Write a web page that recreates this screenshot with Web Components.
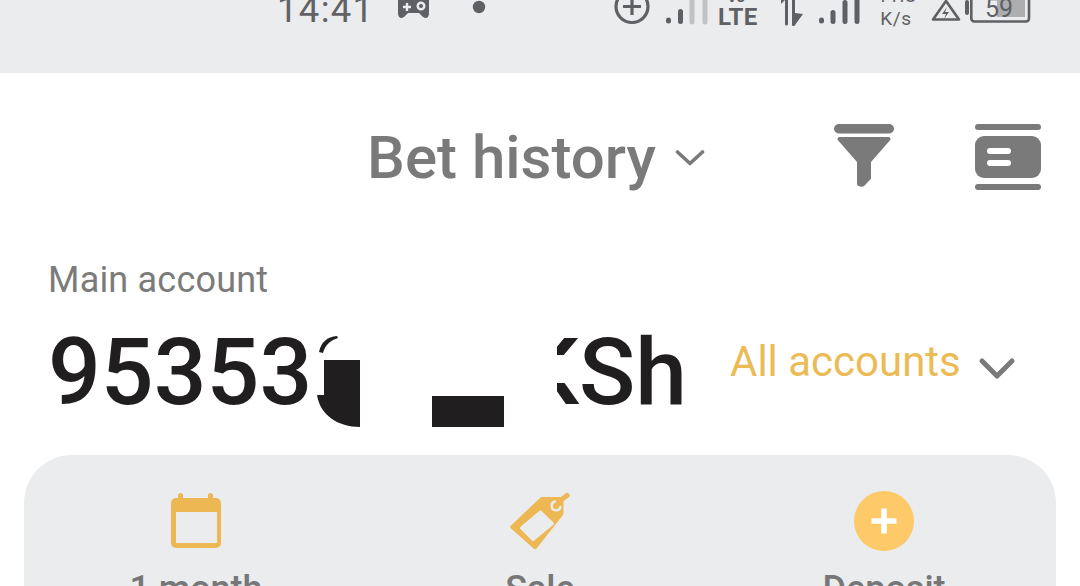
<!DOCTYPE html>
<html><head><meta charset="utf-8"><style>
html,body{margin:0;padding:0;background:#fff}
body{width:1080px;height:586px;overflow:hidden;font-family:Roboto,"Liberation Sans",sans-serif}
</style></head><body>
<app-screen>
<status-bar></status-bar>
<page-header>Bet history</page-header>
<account-summary></account-summary>
<action-panel>
<action-item label="1 month"><svg width="50" height="56" viewBox="0 0 50 56"><path fill="#edb754" fill-rule="evenodd" d="M7 2.500a2.500 2.500 0 0 1 5 0V5h25V2.500a2.500 2.500 0 0 1 5 0V5h3a5 5 0 0 1 5 5v40a5 5 0 0 1-5 5H5a5 5 0 0 1-5-5V10a5 5 0 0 1 5-5h2zM5 19v31h41V19z"/></svg></action-item>
<action-item label="Sale"><svg width="60" height="60" viewBox="0 0 60 60"><g transform="translate(1 2)"><path fill="#edb754" stroke="#edb754" stroke-width="5" stroke-linejoin="round" d="M31 6.500H50V20.500L24 53.500 2 34z"/><path fill="none" stroke="#edb754" stroke-width="5" stroke-linecap="round" d="M50 7 56 2.500"/><path fill="#ebecee" stroke="#ebecee" stroke-width="3" stroke-linejoin="round" d="M29.500 19 41.500 30.500 22 46.500 10.500 35z"/><path fill="none" stroke="#ebecee" stroke-width="2.400" stroke-linecap="round" d="M44 8.500a4.500 4.500 0 1 0 5.500 5.500"/></g></svg></action-item>
<action-item label="Deposit"><svg width="60" height="60" viewBox="0 0 60 60"><circle cx="30" cy="30" r="30" fill="#fdc969"/><path stroke="#fff" stroke-width="5.500" d="M30 17.500v25M17.500 30h25"/></svg></action-item>
</action-panel>
</app-screen>
<script>
function def(name,html){customElements.define(name,class extends HTMLElement{constructor(){super();this.attachShadow({mode:"open"}).innerHTML=html}})}
def("app-screen",`<style>:host{display:flex;flex-direction:column;width:1080px;height:586px;overflow:hidden}::slotted(*){flex:none}</style><slot></slot>`);
def("status-bar",`<style>
:host{display:flex;height:73px;flex:none;background:#ebecee;color:#5f6063;overflow:hidden;align-items:flex-start;font-family:Roboto,"Liberation Sans",sans-serif}
.row{display:flex;width:100%;height:73px;padding-left:277px;box-sizing:border-box;align-items:flex-start}
.time{font-size:36.500px;line-height:42px;margin-top:-11px;width:121px;letter-spacing:1.300px;color:#616265;white-space:nowrap}
svg{display:block;flex:none}
.net{font-size:19px;line-height:23px;text-align:center;letter-spacing:.6px}
.net div{height:23px}
.tech{margin-left:10px;position:relative;width:38px;height:26px;flex:none}
.lte{position:absolute;left:0;top:8px;font-size:24px;font-weight:700;line-height:18px;letter-spacing:.3px}
.vo{position:absolute;left:9px;top:-8px;font-size:15px;font-weight:700;line-height:11px}
</style><div class="row">
<span class="time">14:41</span>
<svg width="36" height="20" viewBox="0 0 36 20"><path fill="#5f6063" d="M3-6h25a3 3 0 0 1 3 3v16c0 2-1 5-3 5s-4-2-5-3l-2-2H10l-2 2c-1 1-3 3-5 3s-3-3-3-5V-3a3 3 0 0 1 3-3z"/><path stroke="#ebecee" stroke-width="2.400" d="M5 7h8M9 3v8"/><circle cx="23" cy="6" r="3.300" fill="none" stroke="#ebecee" stroke-width="2.400"/></svg>
<svg width="14" height="14" viewBox="0 0 14 14" style="margin-left:38px"><circle cx="7" cy="7" r="6.200" fill="#5f6063"/></svg>
<svg width="36" height="26" viewBox="0 0 36 26" style="margin-left:128px"><circle cx="18" cy="6.500" r="16" fill="none" stroke="#5f6063" stroke-width="3.200"/><path stroke="#5f6063" stroke-width="3.200" d="M18-3v18M9 6.500h18"/></svg>
<svg width="42" height="26" viewBox="0 0 42 26" style="margin-left:16px"><g stroke-linecap="round" stroke-width="5" fill="none"><path stroke="#5f6063" d="M2.500 20v1M14.500 11.500v10"/><path stroke="#c1c2c4" d="M26-2v24M39-2v24"/></g></svg>
<div class="tech"><span class="vo">Vo</span><span class="lte">LTE</span></div>
<svg width="28" height="26" viewBox="0 0 28 26" style="margin-left:22px"><path fill="#5f6063" d="M3-2 7-6h3v30a1.500 1.500 0 0 1-3 0V0L3 4zM14-6h3v19l8 1-8 11a1.500 1.500 0 0 1-3-1z"/></svg>
<svg width="44" height="26" viewBox="0 0 44 26" style="margin-left:12px"><g stroke="#5f6063" stroke-linecap="round" fill="none" stroke-width="5"><path d="M3.500 20v1M15 12.500v9M27 2.500v19M39-6v27.500"/></g></svg>
<div class="net" style="margin:-16px 0 0 15px;width:38px;white-space:nowrap"><div>11.8</div><div>K/s</div></div>
<svg width="30" height="22" viewBox="0 0 30 22" style="margin-left:16px"><path fill="none" stroke="#5f6063" stroke-width="2.600" stroke-linejoin="round" d="M15 1 2 19.500h26z"/><path fill="#5f6063" d="M16 7l-5 7h4l-2 5 5-7h-4z"/></svg>
<svg width="66" height="24" viewBox="0 0 66 24" style="margin-left:4px"><rect x="0" y="0" width="4" height="15" rx="2" fill="#5f6063"/><path fill="#adaeb0" d="M32-4h28v21H32z"/><rect x="6.300" y="-8" width="57.700" height="29.500" rx="3" fill="none" stroke="#5f6063" stroke-width="2.600"/><text x="34" y="17" text-anchor="middle" font-family="Roboto" font-size="25" fill="#5f6063">59</text></svg>
</div>`);
def("page-header",`<style>
:host{display:block;height:170px;flex:none;box-sizing:border-box;color:#7a7a7a}
.bar{display:flex;align-items:center;height:169px;padding-left:367px;box-sizing:border-box}
.t{font-size:60px;font-weight:500;line-height:70px;margin-top:1px}
svg{display:block;flex:none}
</style><div class="bar">
<span class="t"><slot></slot></span>
<svg width="30" height="18" viewBox="0 0 30 18" style="margin:0 0 0 19px"><path d="M2.500 3 15 14.500 27.500 3" fill="none" stroke="#7a7a7a" stroke-width="3.600" stroke-linecap="round" stroke-linejoin="round"/></svg>
<svg width="60" height="64" viewBox="0 0 60 64" style="margin-left:129px;margin-top:-3px"><rect width="60" height="9.500" rx="4.700" fill="#7a7a7a"/><path fill="#7a7a7a" d="M5.500 13h49c1.800 0 2.600 2 1.500 3.200L37 38v16c0 .7-.3 1.200-.8 1.600l-6 6.400c-1.500 1.500-7.200.5-7.200-2V38L4 16.200C3 15 3.700 13 5.500 13z"/></svg>
<svg width="66" height="66" viewBox="0 0 66 66" style="margin-left:81px;margin-top:-1px"><rect x="0" y="0" width="66" height="6" rx="3" fill="#7a7a7a"/><rect x="0" y="12" width="66" height="42" rx="9" fill="#7a7a7a"/><rect x="0" y="60" width="66" height="6" rx="3" fill="#7a7a7a"/><rect x="12" y="24" width="24" height="6" rx="3" fill="#fff"/><rect x="12" y="36" width="24" height="6" rx="3" fill="#fff"/></svg>
</div>`);
def("account-summary",`<style>
:host{display:block;height:212px;flex:none;box-sizing:border-box;padding-left:48px;position:relative}
.lbl{font-size:36px;line-height:40px;color:#7b7b7b;padding-top:17px;letter-spacing:.2px}
.row{display:flex;align-items:center;height:96px;margin-top:25px}
.bal{font-size:93px;font-weight:500;line-height:96px;color:#211e1f;width:636px;white-space:nowrap}
.all{font-size:42px;color:#ebbb56;line-height:48px;margin-left:46px;margin-top:-22px;white-space:nowrap}
svg{display:block;flex:none}
.mask{position:absolute;background:#fff}
.ink{position:absolute;background:#211e1f}
</style>
<div class="lbl">Main account</div>
<div class="row"><span class="bal">95353<span style="display:inline-block;width:208px"></span>KSh</span><span class="all">All accounts</span><svg width="38" height="24" viewBox="0 0 38 24" style="margin:-8px 0 0 17px"><path d="M4 4 19 19 34 4" fill="none" stroke="#7a7a7a" stroke-width="5" stroke-linecap="round" stroke-linejoin="round"/></svg></div>
<div class="mask" style="left:315px;top:85px;width:242px;height:85px"></div>
<div class="mask" style="left:557px;top:112px;width:24px;height:28px"></div>
<svg width="60" height="100" viewBox="0 0 60 100" style="position:absolute;left:310px;top:87px"><path fill="#211e1f" d="M14 30H50V97C28 97 10 85 7 65H14Z"/><path fill="#211e1f" d="M9 22C11 12 17 7 27 6L28 8C21 10 15 15 13 23Z"/></svg>
<div class="ink" style="left:432px;top:153px;width:72px;height:31px"></div>
`);
def("action-panel",`<style>
:host{display:grid;grid-template-columns:repeat(3,1fr);margin:0 24px;height:131px;flex:none;background:#ebecee;border-radius:48px 48px 0 0;padding-top:36px;box-sizing:border-box;overflow:hidden}
</style><slot></slot>`);
customElements.define("action-item",class extends HTMLElement{constructor(){super();const s=this.attachShadow({mode:"open"});s.innerHTML=`<style>
:host{display:flex;flex-direction:column;align-items:center}
.ic{height:60px;display:flex;align-items:center;justify-content:center}
.l{font-size:36px;font-weight:500;line-height:40px;color:#777;margin-top:18px;white-space:nowrap}
</style><div class="ic"><slot></slot></div><div class="l"></div>`;s.querySelector(".l").textContent=this.getAttribute("label")}});
</script>
</body></html>
